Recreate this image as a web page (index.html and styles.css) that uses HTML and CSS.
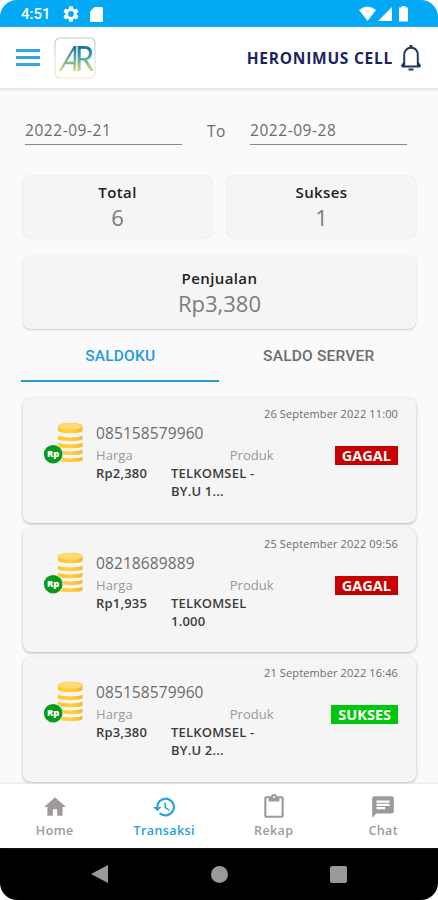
FILE: index.html
```html
<!DOCTYPE html>
<html lang="id">
<head>
<meta charset="UTF-8">
<title>Transaksi</title>
<link rel="stylesheet" href="styles.css">
</head>
<body>
<svg width="0" height="0" class="defs">
	<linearGradient id="gold" x1="0" y1="0" x2="1" y2="0"><stop offset="0" stop-color="#ffc61f"/><stop offset=".5" stop-color="#ffd045"/><stop offset="1" stop-color="#f8b62c"/></linearGradient>
	<symbol id="coins" viewBox="0 0 40 43">
		<g fill="url(#gold)">
			<path d="M15 34.500c3 2.500 21.500 2.500 24.500 0v3.800c-3 2.500-21.500 2.500-24.500 0z"/>
			<path d="M15 27.500c3 2.500 21.500 2.500 24.500 0v3.800c-3 2.500-21.500 2.500-24.500 0z"/>
			<path d="M15 20.600c3 2.500 21.500 2.500 24.500 0v3.800c-3 2.500-21.500 2.500-24.500 0z"/>
			<path d="M15 13.500c3 2.500 21.500 2.500 24.500 0v3.800c-3 2.500-21.500 2.500-24.500 0z"/>
			<path d="M15 4.500c0-5 24.500-5 24.500 0v4.500c-3 3-21.500 3-24.500 0z"/>
		</g>
		<ellipse cx="27.200" cy="4.400" rx="11.800" ry="3.200" fill="#ffdc73"/>
		<circle cx="10.200" cy="32.200" r="10.300" fill="#f5f5f5"/>
		<circle cx="10.200" cy="32.200" r="9.300" fill="#0a9a1b"/>
	</symbol>
</svg>
<div class="phone">
	<div class="status">
		<span class="clock">4:51</span>
		<svg class="gear" width="16" height="16" viewBox="2 2 20 20"><path d="M19.140 12.940a7 7 0 0 0 0-1.880l2.030-1.580a.5.5 0 0 0 .120-.610l-1.920-3.320a.5.5 0 0 0-.590-.220l-2.390.960a7 7 0 0 0-1.620-.940l-.360-2.540a.5.5 0 0 0-.480-.410h-3.840a.5.5 0 0 0-.470.410l-.360 2.540a7 7 0 0 0-1.620.940l-2.390-.960a.5.5 0 0 0-.590.220L2.740 8.870a.5.5 0 0 0 .120.610l2.030 1.580a7 7 0 0 0 0 1.880l-2.030 1.580a.5.5 0 0 0-.120.610l1.920 3.320c.120.220.370.290.590.220l2.390-.960c.5.380 1.030.700 1.620.940l.360 2.540c.050.240.240.410.480.410h3.840c.240 0 .440-.170.470-.410l.360-2.540a7 7 0 0 0 1.620-.940l2.390.960c.220.080.470 0 .590-.220l1.920-3.320a.5.5 0 0 0-.120-.610zM12 15.600a3.600 3.600 0 1 1 0-7.200 3.600 3.600 0 0 1 0 7.200z"/></svg>
		<svg class="sd" width="13" height="15" viewBox="0 0 13 15"><path d="M4.500 0H11.500Q13 0 13 1.500V13.500Q13 15 11.500 15H1.500Q0 15 0 13.500V4.500z"/></svg>
		<svg class="signals" width="51" height="16" viewBox="0 0 51 16"><path d="M0 4Q8.500-3 17 4L8.500 15z"/><path d="M33 1v14H19z"/><path d="M42.500 1.500V0h4v1.500H49V15.500H40V1.500z"/></svg>
	</div>
	<header class="appbar">
		<div class="burger"><i></i><i></i><i></i></div>
		<svg class="logo" width="42" height="42" viewBox="0 0 42 42">
			<linearGradient id="ar" gradientUnits="userSpaceOnUse" x1="0" y1="7" x2="0" y2="35"><stop offset="0" stop-color="#12628c"/><stop offset=".45" stop-color="#489fb0"/><stop offset="1" stop-color="#e0dc68"/></linearGradient>
			<linearGradient id="frame" x1="0" y1="0" x2="0" y2="1"><stop offset="0" stop-color="#b5cbd3"/><stop offset=".5" stop-color="#dce7e2"/><stop offset="1" stop-color="#eeedc3"/></linearGradient>
			<rect x="1" y="1" width="40" height="40" rx="5" fill="none" stroke="url(#frame)" stroke-width="1.200"/>
			<g fill="url(#ar)" class="mono">
				<text x="21" y="34" transform="skewX(-17) scale(.72 1)">A</text>
				<text x="23.500" y="34" transform="scale(.88 1)">R</text>
			</g>
		</svg>
		<span class="shop">HERONIMUS CELL</span>
		<svg class="bell" width="22" height="28" viewBox="0 0 22 28" fill="none" stroke="#1b3a5c" stroke-width="2"><path d="M2 22.500h18M4.200 22V11.500C4.200 6.500 7 3.800 11 3.800s6.800 2.700 6.800 7.700V22M4.200 18.500L1.500 22.500M17.800 18.500l2.700 4"/><path d="M11 1v3" stroke-width="3"/><path d="M8.500 25.500h5" stroke-width="2"/></svg>
	</header>
	<main>
		<div class="range">
			<span class="date">2022-09-21</span>
			<span class="to">To</span>
			<span class="date">2022-09-28</span>
		</div>
		<div class="stats">
			<div class="stat"><b>Total</b><span>6</span></div>
			<div class="stat"><b>Sukses</b><span>1</span></div>
			<div class="stat wide"><b>Penjualan</b><span>Rp3,380</span></div>
		</div>
		<nav class="tabs">
			<span class="tab active">SALDOKU</span>
			<span class="tab">SALDO SERVER</span>
		</nav>
		<div class="list">
			<div class="card">
				<svg class="coins"><use href="#coins"/><text x="10.200" y="35.300" text-anchor="middle">Rp</text></svg>
				<div class="info">
					<div class="when">26 September 2022 11:00</div>
					<div class="number">085158579960</div>
					<div class="labels"><span>Harga</span><span class="produk">Produk</span></div>
					<div class="values"><span class="price">Rp2,380</span><span>TELKOMSEL -<br>BY.U 1...</span></div>
				</div>
				<span class="badge gagal">GAGAL</span>
			</div>
			<div class="card">
				<svg class="coins"><use href="#coins"/><text x="10.200" y="35.300" text-anchor="middle">Rp</text></svg>
				<div class="info">
					<div class="when">25 September 2022 09:56</div>
					<div class="number">08218689889</div>
					<div class="labels"><span>Harga</span><span class="produk">Produk</span></div>
					<div class="values"><span class="price">Rp1,935</span><span>TELKOMSEL<br>1.000</span></div>
				</div>
				<span class="badge gagal">GAGAL</span>
			</div>
			<div class="card">
				<svg class="coins"><use href="#coins"/><text x="10.200" y="35.300" text-anchor="middle">Rp</text></svg>
				<div class="info">
					<div class="when">21 September 2022 16:46</div>
					<div class="number">085158579960</div>
					<div class="labels"><span>Harga</span><span class="produk">Produk</span></div>
					<div class="values"><span class="price">Rp3,380</span><span>TELKOMSEL -<br>BY.U 2...</span></div>
				</div>
				<span class="badge sukses">SUKSES</span>
			</div>
		</div>
	</main>
	<nav class="bottom">
		<div class="item"><svg width="26" height="26" viewBox="0 0 24 24"><path d="M10 20v-6h4v6h5v-8h3L12 3 2 12h3v8z"/></svg>Home</div>
		<div class="item on"><svg width="25" height="25" viewBox="0 0 24 24"><path d="M13 3a9 9 0 0 0-9 9H1l3.890 3.890.070.140L9 12H6a7 7 0 1 1 2.060 4.940l-1.420 1.420A9 9 0 1 0 13 3zm-1 5v5l4.280 2.540.720-1.210-3.500-2.080V8z"/></svg>Transaksi</div>
		<div class="item"><svg width="26" height="26" viewBox="0 0 24 24"><path d="M19 2h-4.180C14.400.840 13.300 0 12 0S9.600.840 9.180 2H5a2 2 0 0 0-2 2v16c0 1.100.900 2 2 2h14a2 2 0 0 0 2-2V4a2 2 0 0 0-2-2zm-7 0a1 1 0 1 1 0 2 1 1 0 0 1 0-2zm7 18H5V4h2v3h10V4h2z"/></svg>Rekap</div>
		<div class="item"><svg width="26" height="26" viewBox="0 0 24 24"><path d="M20 2H4a2 2 0 0 0-2 2v18l4-4h14a2 2 0 0 0 2-2V4a2 2 0 0 0-2-2zM6 9h12v2H6zm8 5H6v-2h8zm4-6H6V6h12z"/></svg>Chat</div>
	</nav>
	<div class="keys">
		<svg width="17" height="18" viewBox="0 0 17 18"><path d="M17 0v18L0 9z"/></svg>
		<i class="round"></i>
		<i class="square"></i>
	</div>
</div>
</body>
</html>
```
FILE: styles.css
```css
*{
	box-sizing : border-box;
}

body{
	margin : 0;
	background : #fff;
	font-family : "Open Sans", "Noto Sans", sans-serif;
}

.defs{
	position : absolute;
}

.phone{
	width : 438px;
	height : 900px;
	display : flex;
	flex-direction : column;
	overflow : hidden;
	border-radius : 17px;
	background : #fafafa;
}

.status{
	height : 27px;
	flex : none;
	display : flex;
	align-items : center;
	padding : 1px 30px 0 21px;
	background : #03a9f4;
	color : #fff;
	fill : #fff;
	font : 500 15px/26px Roboto, sans-serif;
}

.clock{
	width : 42px;
}

.sd{
	margin-left : 11px;
}

.signals{
	margin-left : auto;
	margin-right : -2px;
}

.appbar{
	height : 62px;
	flex : none;
	display : flex;
	align-items : center;
	padding : 0 16px;
	background : #fff;
	border-bottom : 1px solid #e8e8e8;
	box-shadow : 0 1px 2px #e4e4e4;
}

.burger{
	width : 24px;
	height : 17px;
	display : flex;
	flex-direction : column;
	justify-content : space-between;
}

.burger i{
	height : 3px;
	background : #35a5e0;
}

.logo{
	margin-left : 14px;
	overflow : visible;
}

.mono{
	font : 400 35px Lato, sans-serif;
}

.shop{
	margin-left : auto;
	font-size : 15.500px;
	font-weight : 700;
	letter-spacing : .75px;
	color : #1c2361;
}

.bell{
	margin-left : 7px;
}

main{
	flex : 1;
	min-height : 0;
	overflow : hidden;
	padding : 28px 22px 0;
}

.range{
	display : grid;
	grid-template-columns : 157px 1fr 157px;
	height : 28px;
	padding : 0 9px 0 3px;
	font-size : 15.500px;
	line-height : 26px;
	letter-spacing : .55px;
	color : #6c6c6c;
}

.date{
	border-bottom : 1px solid #888;
}

.to{
	padding-left : 1px;
	text-align : center;
	line-height : 28px;
}

.stats{
	display : grid;
	grid-template-columns : 1fr 1fr;
	grid-template-rows : 62px 74px;
	gap : 17px 15px;
	margin-top : 31px;
	padding : 0 0 0 1px;
}

.stat{
	display : flex;
	flex-direction : column;
	align-items : center;
	padding-top : 5px;
	border-radius : 8px;
	background : #f5f5f5;
	box-shadow : 0 0 2px #d4d4d4;
	color : #7c7c7c;
}

.stat b{
	font-size : 15px;
	font-weight : 600;
	line-height : 22px;
	letter-spacing : .4px;
	color : #222;
}

.stat span{
	font-size : 22px;
	line-height : 28px;
}

.wide{
	grid-column : 1 / 3;
	padding-top : 12px;
	box-shadow : 0 1px 2px #ccc;
}

.tabs{
	display : flex;
	height : 53px;
	margin-left : -1px;
}

.tab{
	width : 198px;
	padding-left : 1px;
	text-align : center;
	font : 500 15.500px/55px Roboto, sans-serif;
	letter-spacing : .2px;
	color : #6c6c6c;
}

.tab:last-child{
	padding-left : 3px;
}

.active{
	border-bottom : 2px solid #249bdf;
	color : #249bdf;
}

.list{
	display : flex;
	flex-direction : column;
	gap : 5px;
	padding : 16px 0 0 1px;
}

.card{
	position : relative;
	height : 124.700px;
	flex : none;
	display : flex;
	padding : 7px 18px 0 20px;
	border-radius : 8px;
	background : #f5f5f5;
	box-shadow : 0 1px 3px #b4b4b4;
}

.coins{
	width : 40px;
	height : 43px;
	margin-top : 17px;
	flex : none;
	font-size : 9.500px;
	font-weight : 800;
	fill : #fff;
}

.info{
	flex : 1;
	margin-left : 13px;
}

.when{
	text-align : right;
	font-size : 11px;
	line-height : 18px;
	letter-spacing : .13px;
	color : #6c6c6c;
}

.number{
	font-size : 15.500px;
	line-height : 20px;
	letter-spacing : .1px;
	color : #6c6c6c;
}

.labels{
	display : flex;
	font-size : 13px;
	line-height : 24px;
	letter-spacing : .05px;
	color : #999;
}

.produk{
	margin-left : 97px;
}

.values{
	display : flex;
	margin-top : -3px;
	font-size : 13px;
	font-weight : 600;
	line-height : 18px;
	letter-spacing : .2px;
	color : #3c3c3c;
}

.price{
	width : 75px;
}

/* status label sits on the right edge of the card */
.badge{
	position : absolute;
	right : 18px;
	top : 48px;
	height : 19px;
	padding : 0 7px;
	font-size : 14.500px;
	font-weight : 700;
	line-height : 20px;
	color : #fff;
}

.gagal{
	background : #c90000;
}

.sukses{
	background : #00c70c;
}

.bottom{
	height : 64px;
	flex : none;
	display : flex;
	background : #fff;
	box-shadow : 0 -1px 2px #e6e6e6;
	position : relative;
}

.item{
	flex : 1;
	display : flex;
	flex-direction : column;
	align-items : center;
	padding-top : 10px;
	font-size : 12.500px;
	font-weight : 600;
	line-height : 22px;
	letter-spacing : .4px;
	color : #9e9a9a;
	fill : #9e9a9a;
}

.item svg{
	height : 26px;
	flex : none;
}

.on{
	color : #249fe3;
	fill : #249fe3;
}

.keys{
	height : 52px;
	flex : none;
	display : flex;
	justify-content : space-between;
	align-items : center;
	padding : 0 91px;
	background : #000;
	fill : #999;
}

.keys i{
	width : 17px;
	height : 17px;
	background : #999;
}

.keys .round{
	border-radius : 50%;
}

.keys .square{
	border-radius : 2px;
}
```
